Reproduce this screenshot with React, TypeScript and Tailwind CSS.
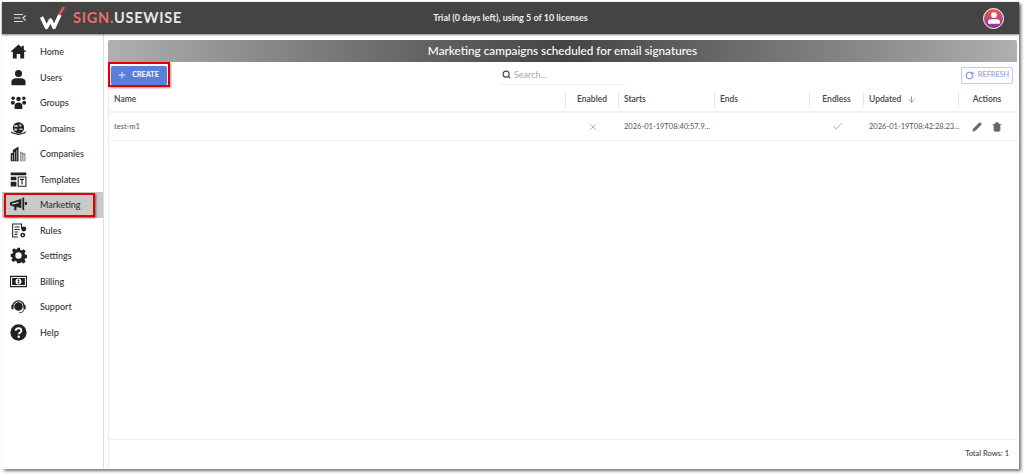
import { ArrowDown, Check, Pencil, Plus, RotateCw, Search, Trash2, X } from "lucide-react";
import type { ReactNode } from "react";

function Svg({ children }: { children: ReactNode }) {
  return (
    <svg viewBox="0 0 24 24" className="w-[17px] h-[17px]" fill="#222">
      {children}
    </svg>
  );
}

const icons: Record<string, ReactNode> = {
  Home: (
    <Svg>
      <path d="M12 2 0.5 12.500H4V22h5.500v-6.500h5V22H20v-9.500h3.500L19.500 9V4h-3v2.300z" />
    </Svg>
  ),
  Users: (
    <Svg>
      <circle cx="12" cy="6.500" r="5" />
      <path d="M2 22v-4c0-3 3-5 6-5h8c3 0 6 2 6 5v4q0 1-1 1H3q-1 0-1-1z" />
    </Svg>
  ),
  Groups: (
    <Svg>
      <circle cx="12" cy="7" r="3.200" />
      <circle cx="4.500" cy="6" r="2.500" />
      <circle cx="19.500" cy="6" r="2.500" />
      <circle cx="4" cy="12.500" r="2.800" />
      <circle cx="20" cy="12.500" r="2.800" />
      <path d="M6.500 21v-4c0-3 2-5 5.500-5s5.500 2 5.500 5v4z" />
    </Svg>
  ),
  Domains: (
    <Svg>
      <circle cx="12" cy="11" r="8" />
      <path d="M1 16q11 7 22 0l-1 2.500q-10 5-20 0z" />
      <path d="M6 7h5v3H6zM13 12h5v2h-5zM13 6h3v3h-3zM6 12h4v3H6z" fill="#bbb" />
    </Svg>
  ),
  Companies: (
    <Svg>
      <path d="M1 23V12l3-1V7l8-5v21z" />
      <path d="M14 23V9l8 3v11z" fill="#999" />
      <path d="M3.500 14v8M6.500 10v12M9.500 7v15M16.500 13v9M19.500 14v8" stroke="#fff" strokeWidth="0.800" />
    </Svg>
  ),
  Templates: (
    <Svg>
      <path d="M1 2h22v4H1zM1 8h8v5H1zM1 15h8v7H1z" />
      <path d="M11.500 8.500h11v13h-11z" fill="none" stroke="#222" strokeWidth="1.500" />
      <path d="M14 11h6v1.600h-2.200V19h-1.600v-6.400H14z" />
    </Svg>
  ),
  Marketing: (
    <Svg>
      <path d="M0 9 16 4v13L9 15.500V20H6v-5l-6-2z" />
      <path d="M17.500 2.500 20 2v18l-2.500-.5z" />
      <path d="M21 8.500h3v4h-3z" />
      <path d="M3 10.500l9-2v1.500l-9 2z" fill="#fff" />
    </Svg>
  ),
  Rules: (
    <Svg>
      <path d="M3 2h14v7h-1.500V3.500h-11v17H11V22H3z" />
      <path d="M6.500 7h7M6.500 10.500h7M6.500 14h5M6.500 17.500h4" stroke="#222" strokeWidth="1.500" />
      <circle cx="19.500" cy="10" r="3.500" />
      <circle cx="18" cy="18.500" r="3.500" />
      <circle cx="18" cy="18.500" r="1.300" fill="#fff" />
    </Svg>
  ),
  Settings: (
    <Svg>
      <path
        fillRule="evenodd"
        d="M10 1h4l.7 3.200 1.900.8 2.800-1.800 2.800 2.800-1.800 2.800.8 1.900 2.800.7v4l-2.800.7-.8 1.500 1.800 2.800-2.800 2.800-2.800-1.800-1.900.8L14 23h-4l-.7-2.800-1.900-.8-2.800 1.800-2.800-2.800 1.800-2.800-.8-1.500L1 14v-4l2.800-.7.8-1.900-1.800-2.800 2.800-2.800 2.800 1.800 1.900-.8zM12 7.500a4.500 4.500 0 1 0 0 9 4.500 4.500 0 0 0 0-9z"
      />
    </Svg>
  ),
  Billing: (
    <Svg>
      <path fillRule="evenodd" d="M0 4h24v16H0zM1.500 5.500v13h21v-13z" />
      <path d="M3 7h18v10H3z" />
      <circle cx="12" cy="12" r="4.200" fill="#fff" />
      <path d="M12 9v6M10.500 10.500h3M10.500 13.500h3" stroke="#222" strokeWidth="1" />
    </Svg>
  ),
  Support: (
    <Svg>
      <circle cx="12" cy="12" r="6" />
      <path d="M4 12a8 8 0 0 1 16 0" fill="none" stroke="#222" strokeWidth="1.800" />
      <path d="M2 10h3v6H2zM19 10h3v6h-3z" />
      <path d="M20 16q-1 5-7 5" fill="none" stroke="#222" strokeWidth="1.200" />
    </Svg>
  ),
  Help: (
    <Svg>
      <circle cx="12" cy="12" r="11.500" />
      <path d="M8 9.500C8 7 10 6 12 6s4 1.200 4 3.300c0 3-3.500 2.700-3.500 5.200" fill="none" stroke="#fff" strokeWidth="2.600" />
      <circle cx="12.300" cy="18" r="1.700" fill="#fff" />
    </Svg>
  ),
};

const nav = Object.keys(icons);

const headCell = "flex items-center h-[15px] border-r border-[#e6e6e6]";

export default function App() {
  return (
    <div className="w-[1024px] h-[475px] bg-white pt-[2px] pl-[2px] overflow-hidden font-['Lato',sans-serif] text-[#333]">
      <div className="w-[1017px] h-[467px] flex flex-col bg-white shadow-[2px_2px_3px_rgba(0,0,0,0.55)]">
        <header className="h-[32px] shrink-0 bg-[#444444] flex items-center text-white shadow-[0_1px_2px_rgba(0,0,0,0.5)] z-10">
          <div className="flex-1 flex items-center">
            <svg viewBox="0 0 12 10" className="w-[12px] h-[10px] ml-[12px]" fill="none" stroke="#ddd" strokeWidth="1.200">
              <path d="M0 1.500h9M0 5h6.500M0 8.500h9M11.500 2.500 9 5l2.500 2.500" />
            </svg>
            <svg viewBox="0 0 28 24" className="w-[28px] h-[24px] ml-[14px]">
              <path d="M1.500 11l5 10.500 4-7.500 3.500 7.500 6-13" fill="none" stroke="#fff" strokeWidth="3.500" strokeLinejoin="round" />
              <path d="M19 9 24 1" stroke="#e2555f" strokeWidth="2.500" />
            </svg>
            <span className="ml-[5px] text-[14.5px] font-bold tracking-[0.75px] leading-none">
              <span className="text-[#ee6a70]">SIGN.</span>
              <span className="text-[#e8e8e8]">USEWISE</span>
            </span>
          </div>
          <div className="text-[9px] font-bold text-[#eeeeee] whitespace-nowrap">
            Trial (0 days left), using 5 of 10 licenses
          </div>
          <div className="flex-1 flex justify-end">
            <div className="w-[21px] h-[21px] mr-[15px] rounded-full border border-white bg-gradient-to-b from-[#f0584f] to-[#8e2d9c] flex items-center justify-center">
              <svg viewBox="0 0 24 24" className="w-[14px] h-[14px]" fill="#fff">
                <circle cx="12" cy="7" r="5" />
                <path d="M2 22v-4q0-4 5-4h10q5 0 5 4v4z" />
              </svg>
            </div>
          </div>
        </header>

        <div className="flex flex-1 min-h-0">
          <aside className="w-[102px] shrink-0 border-r border-[#dddddd] pt-[5px]">
            {nav.map((name) => (
              <div
                key={name}
                className={`relative h-[25.5px] flex items-center pl-[8px] ${name === "Marketing" ? "bg-[#c9c9c9]" : ""}`}
              >
                {icons[name]}
                <span className="ml-[13px] text-[9px] font-medium text-[#333]">{name}</span>
                {name === "Marketing" && (
                  <div className="absolute left-[2px] top-[1px] w-[91px] h-[24px] border-2 border-[#e00000] shadow-[1px_1px_2px_rgba(0,0,0,0.5)]" />
                )}
              </div>
            ))}
          </aside>

          <main className="flex-1 min-w-0 pl-[4px] pr-[2px] pt-[6px] pb-[1px] flex flex-col">
            <div className="h-[22px] shrink-0 rounded-t-[2px] bg-gradient-to-r from-[#b0b0b0] via-[#444444] to-[#b0b0b0] flex items-center justify-center text-white text-[11.75px] font-medium">
              Marketing campaigns scheduled for email signatures
            </div>

            <div className="flex-1 min-h-0 flex flex-col border-l border-[#eeeeee]">
              <div className="h-[26px] shrink-0 relative flex items-center pl-[2px] pr-[4px]">
                <button className="w-[56px] h-[19px] rounded-[2px] bg-[#5b7fd9] text-white flex items-center justify-center gap-[5px] pr-[2px] text-[7.25px] font-bold shadow-[0_1px_2px_rgba(0,0,0,0.4)]">
                  <Plus className="w-[10px] h-[10px]" />
                  CREATE
                </button>
                <div className="absolute left-[-1px] top-0 w-[62px] h-[25px] border-2 border-[#e00000] shadow-[1px_1px_2px_rgba(0,0,0,0.4)]" />
                <div className="ml-[333px] w-[125px] h-[20px] flex items-center gap-[3px] pl-[2px] border-b border-[#eeeeee]">
                  <Search className="w-[9px] h-[9px] text-[#444]" strokeWidth={3} />
                  <span className="text-[9px] text-[#aaaaaa]">Search...</span>
                </div>
                <button className="ml-auto w-[52px] h-[17px] rounded-[2px] border border-[#bccdf0] text-[#9db1e4] flex items-center justify-center gap-[4px] text-[7.25px] font-bold">
                  <RotateCw className="w-[9px] h-[9px] text-[#5b7fd9]" strokeWidth={2.5} />
                  REFRESH
                </button>
              </div>

              <div className="h-[25px] shrink-0 flex items-center border-b-2 border-[#f0f0f0] text-[8.5px] font-semibold text-[#444]">
                <div className={`${headCell} w-[457px] pl-[5px]`}>Name</div>
                <div className={`${headCell} w-[53px] justify-center`}>Enabled</div>
                <div className={`${headCell} w-[96px] pl-[5px]`}>Starts</div>
                <div className={`${headCell} w-[95px] pl-[5px]`}>Ends</div>
                <div className={`${headCell} w-[54px] justify-center`}>Endless</div>
                <div className={`${headCell} w-[95px] pl-[5px] gap-[6px]`}>
                  Updated
                  <ArrowDown className="w-[9px] h-[9px] text-[#777]" />
                </div>
                <div className="flex items-center justify-center w-[56px]">Actions</div>
              </div>

              <div className="h-[28px] shrink-0 flex items-center border-b border-[#eeeeee] text-[7.5px] text-[#555]">
                <div className="w-[457px] pl-[5px]">test-m1</div>
                <div className="w-[53px] flex justify-center">
                  <X className="w-[10px] h-[10px] text-[#888]" strokeWidth={1.5} />
                </div>
                <div className="w-[96px] pl-[5px] whitespace-nowrap">2026-01-19T08:40:57.9...</div>
                <div className="w-[95px]" />
                <div className="w-[54px] flex justify-center">
                  <Check className="w-[11px] h-[11px] text-[#777]" strokeWidth={1.5} />
                </div>
                <div className="w-[95px] pl-[5px] whitespace-nowrap">2026-01-19T08:42:28.23...</div>
                <div className="w-[56px] flex justify-center items-center gap-[10px] text-[#666]">
                  <Pencil className="w-[10px] h-[10px]" fill="#666" />
                  <Trash2 className="w-[10px] h-[10px]" fill="#666" />
                </div>
              </div>

              <div className="flex-1" />

              <div className="h-[29px] shrink-0 border-t border-[#eeeeee] flex items-center justify-end pr-[8px] text-[7.5px] font-medium text-[#444]">
                Total Rows: 1
              </div>
            </div>
          </main>
        </div>
      </div>
    </div>
  );
}
